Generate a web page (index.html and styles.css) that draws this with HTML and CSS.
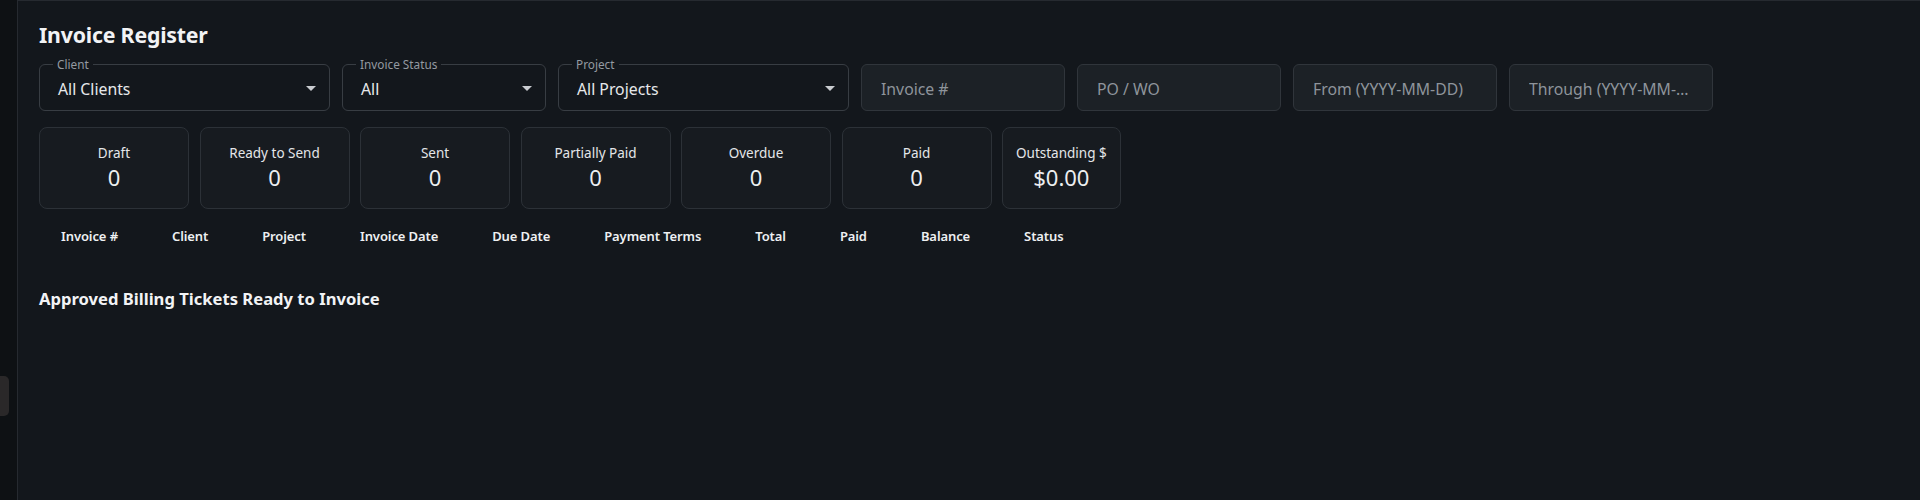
FILE: index.html
```html
<!DOCTYPE html>
<html lang="en">
<head>
<meta charset="utf-8">
<title>Invoice Register</title>
<link rel="stylesheet" href="styles.css">
</head>
<body>
<div class="app">
  <aside class="sidebar">
    <div class="handle"></div>
  </aside>
  <main class="main">
    <h1 class="title">Invoice Register</h1>

    <div class="filters">
      <div class="select wide">
        <span class="flabel">Client</span>
        <span class="value">All Clients</span>
        <svg class="arrow" viewBox="0 0 24 24"><path d="M7 10l5 5 5-5z"/></svg>
      </div>
      <div class="select narrow">
        <span class="flabel">Invoice Status</span>
        <span class="value">All</span>
        <svg class="arrow" viewBox="0 0 24 24"><path d="M7 10l5 5 5-5z"/></svg>
      </div>
      <div class="select wide">
        <span class="flabel">Project</span>
        <span class="value">All Projects</span>
        <svg class="arrow" viewBox="0 0 24 24"><path d="M7 10l5 5 5-5z"/></svg>
      </div>
      <input class="field" type="text" placeholder="Invoice #">
      <input class="field" type="text" placeholder="PO / WO">
      <input class="field" type="text" placeholder="From (YYYY-MM-DD)">
      <input class="field" type="text" placeholder="Through (YYYY-MM-DD)">
    </div>

    <div class="stats">
      <div class="stat"><div class="slabel">Draft</div><div class="svalue">0</div></div>
      <div class="stat"><div class="slabel">Ready to Send</div><div class="svalue">0</div></div>
      <div class="stat"><div class="slabel">Sent</div><div class="svalue">0</div></div>
      <div class="stat"><div class="slabel">Partially Paid</div><div class="svalue">0</div></div>
      <div class="stat"><div class="slabel">Overdue</div><div class="svalue">0</div></div>
      <div class="stat"><div class="slabel">Paid</div><div class="svalue">0</div></div>
      <div class="stat auto"><div class="slabel">Outstanding $</div><div class="svalue">$0.00</div></div>
    </div>

    <table class="grid">
      <thead>
        <tr>
          <th>Invoice #</th>
          <th>Client</th>
          <th>Project</th>
          <th>Invoice Date</th>
          <th>Due Date</th>
          <th>Payment Terms</th>
          <th>Total</th>
          <th>Paid</th>
          <th>Balance</th>
          <th>Status</th>
        </tr>
      </thead>
      <tbody></tbody>
    </table>

    <h2 class="subtitle">Approved Billing Tickets Ready to Invoice</h2>
  </main>
</div>
</body>
</html>
```

FILE: styles.css
```css
* { box-sizing: border-box; }

html, body {
  margin: 0;
  height: 100%;
  background: #0e1114;
  font-family: "Noto Sans", "Open Sans", "DejaVu Sans", sans-serif;
  color: #e8eaed;
}

.app {
  display: flex;
  height: 100vh;
}

.sidebar {
  width: 17px;
  flex: 0 0 17px;
  background: #0e1114;
  display: flex;
  flex-direction: column;
  padding-top: 376px;
}

.handle {
  width: 9px;
  height: 40px;
  background: #2a2829;
  border-radius: 0 5px 5px 0;
}

.main {
  flex: 1;
  background: #13171c;
  border-top: 1px solid #262a30;
  border-left: 1px solid #262a30;
  padding: 18px 21px;
}

.title {
  margin: 0;
  font-size: 21.3px;
  font-weight: 700;
  line-height: 32px;
  color: #f2f3f5;
  letter-spacing: -0.2px;
}

.filters {
  display: flex;
  gap: 12px;
  margin-top: 13px;
}

.select {
  position: relative;
  height: 47px;
  border: 1px solid #383d43;
  border-radius: 6px;
  display: flex;
  align-items: center;
  padding-left: 18px;
  padding-top: 2px;
}

.select.wide { width: 291px; }
.select.narrow { width: 204px; }

.flabel {
  position: absolute;
  top: -9px;
  left: 13px;
  padding: 0 4px;
  font-size: 11.8px;
  line-height: 16px;
  color: #949aa1;
  background: #13171c;
}

.value {
  font-size: 15.8px;
  color: #e6e8ea;
}

.arrow {
  position: absolute;
  right: 6px;
  top: 11px;
  width: 24px;
  height: 24px;
  fill: #c9ccd0;
}

.field {
  width: 204px;
  height: 47px;
  border: 1px solid #30353b;
  border-radius: 6px;
  background: #1c2126;
  padding: 2px 21px 0 19px;
  font-family: inherit;
  font-size: 15.8px;
  color: #e6e8ea;
  outline: none;
  text-overflow: ellipsis;
}

.field::placeholder {
  color: #8e949b;
  opacity: 1;
}

.stats {
  display: flex;
  gap: 10.5px;
  margin-top: 16px;
}

.stat {
  width: 150px;
  height: 82px;
  border: 1px solid #2c3137;
  border-radius: 8px;
  background: #171b20;
  text-align: center;
  padding-top: 15px;
}

.stat.auto {
  width: auto;
  padding-left: 13px;
  padding-right: 13px;
}

.slabel {
  font-size: 13.5px;
  line-height: 20px;
  color: #e4e6e9;
}

.svalue {
  font-size: 22px;
  line-height: 29px;
  color: #eceef0;
}

.grid {
  border-collapse: collapse;
  margin-top: 11px;
}

.grid th {
  padding: 6px 27px;
  font-size: 13px;
  line-height: 20px;
  font-weight: 600;
  letter-spacing: -0.1px;
  color: #eef0f2;
  text-align: left;
  white-space: nowrap;
}

.grid th:first-child { padding-left: 22px; }

.subtitle {
  margin: 33px 0 0;
  font-size: 16.6px;
  line-height: 28px;
  font-weight: 700;
  color: #f2f3f5;
}
```
